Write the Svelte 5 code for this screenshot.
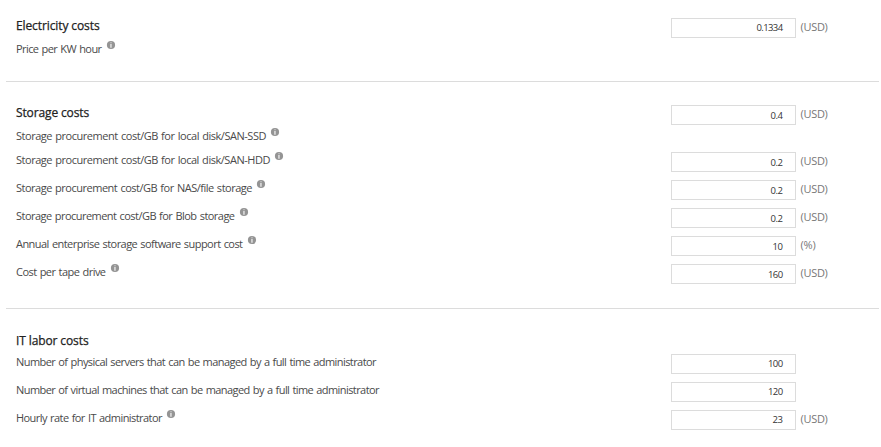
<script>
  const sections = [
    {
      id: 'electricity',
      title: 'Electricity costs',
      width: 83.5,
      labels: [{ text: 'Price per KW hour', width: 85.5, info: true }],
      fields: [{ value: '0.1334', width: 26, unit: '(USD)' }]
    },
    {
      id: 'storage',
      title: 'Storage costs',
      width: 73,
      labels: [
        { text: 'Storage procurement cost/GB for local disk/SAN-SSD', width: 250, info: true },
        { text: 'Storage procurement cost/GB for local disk/SAN-HDD', width: 254, info: true },
        { text: 'Storage procurement cost/GB for NAS/file storage', width: 236, info: true },
        { text: 'Storage procurement cost/GB for Blob storage', width: 218.5, info: true },
        { text: 'Annual enterprise storage software support cost', width: 226.5, info: true },
        { text: 'Cost per tape drive', width: 89.5, info: true }
      ],
      fields: [
        { value: '0.4', width: 12, unit: '(USD)' },
        { value: '0.2', width: 12, unit: '(USD)' },
        { value: '0.2', width: 12, unit: '(USD)' },
        { value: '0.2', width: 12, unit: '(USD)' },
        { value: '10', width: 10, unit: '(%)' },
        { value: '160', width: 14.5, unit: '(USD)' }
      ]
    },
    {
      id: 'labor',
      title: 'IT labor costs',
      width: 72.5,
      labels: [
        { text: 'Number of physical servers that can be managed by a full time administrator', width: 360 },
        { text: 'Number of virtual machines that can be managed by a full time administrator', width: 363 },
        { text: 'Hourly rate for IT administrator', width: 146, info: true }
      ],
      fields: [
        { value: '100', width: 14.5 },
        { value: '120', width: 14.5 },
        { value: '23', width: 10, unit: '(USD)' }
      ]
    }
  ];

  // Adjusts tracking so that a text run fills the given width.
  function fit(node, width) {
    const natural = node.getBoundingClientRect().width;
    const spacing = (width - natural) / node.textContent.length;
    node.style.letterSpacing = `${spacing}px`;
  }
</script>

<main>
  {#each sections as s (s.id)}
    <section class={s.id}>
      <div class="labels">
        <h2><span use:fit={s.width}>{s.title}</span></h2>
        {#each s.labels as l}
          <div class="label">
            <span use:fit={l.width}>{l.text}</span>
            {#if l.info}
              <svg class="info" viewBox="0 0 8 8" aria-hidden="true">
                <circle cx="4" cy="4" r="4.1" fill="#949494" />
                <path d="M3.5 1.2h1v1h-1zM3.3 3h1.3v3.7H3.3z" fill="#ededed" />
              </svg>
            {/if}
          </div>
        {/each}
      </div>
      <div class="fields">
        {#each s.fields as f}
          <div class="field">
            <div class="box"><span use:fit={f.width}>{f.value}</span></div>
            {#if f.unit}
              <div class="unit"><span use:fit={f.unit === '(%)' ? 15 : 27}>{f.unit}</span></div>
            {/if}
          </div>
        {/each}
      </div>
    </section>
  {/each}
</main>

<style>
  :global(body) {
    background: #fff;
  }
  main {
    width: 881px;
    height: 447px;
    overflow: hidden;
    box-sizing: border-box;
    padding: 0 2px 0 6px;
    font-family: 'Open Sans', 'Noto Sans', sans-serif;
    font-size: 11px;
    color: #4a4a4a;
  }
  section {
    display: flex;
    box-sizing: border-box;
    padding-left: 10px;
    border-bottom: 1px solid #dcdcdc;
  }
  .electricity {
    height: 82px;
    padding-top: 16px;
  }
  .storage {
    height: 227px;
    padding-top: 21px;
  }
  .labor {
    height: 138px;
    padding-top: 22px;
    border-bottom: 0;
  }
  span {
    white-space: pre;
  }
  .labels {
    width: 655px;
    display: flex;
    flex-direction: column;
  }
  h2 {
    margin: 0 0 1px;
    height: 20px;
    line-height: 20px;
    font-size: 12px;
    font-weight: 400;
    -webkit-text-stroke: 0.25px #222;
    color: #222;
  }
  .labor h2 {
    margin-bottom: -1px;
  }
  .label {
    display: flex;
    height: 24px;
    line-height: 23px;
    margin-bottom: 4px;
    word-spacing: 0.8px;
  }
  .storage .label:nth-child(2) {
    margin-bottom: 0;
  }
  .info {
    width: 8px;
    height: 8px;
    margin: 4px 0 0 5px;
    overflow: visible;
  }
  .fields {
    display: flex;
    flex-direction: column;
    gap: 8px;
    padding-top: 2px;
  }
  .storage .field:first-child {
    margin-bottom: 19px;
  }
  .labor .fields {
    padding-top: 23px;
  }
  .field {
    display: flex;
    height: 20px;
  }
  .box {
    width: 125px;
    height: 20px;
    box-sizing: border-box;
    border: 1px solid #dcdcdc;
    padding-right: 12.5px;
    text-align: right;
    font-size: 9.5px;
    line-height: 18px;
    color: #333;
  }
  .storage .box {
    padding-top: 1px;
  }
  .unit {
    margin-left: 4.5px;
    line-height: 18px;
    color: #777;
  }
</style>
